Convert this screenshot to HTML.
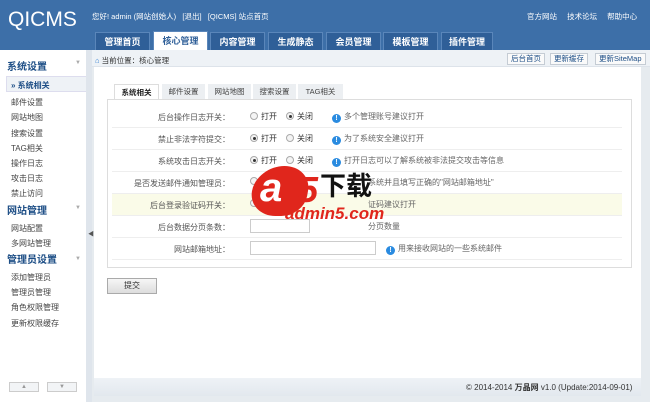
<!DOCTYPE html>
<html><head><meta charset="utf-8"><style>
*{margin:0;padding:0;box-sizing:border-box}
body{width:650px;height:402px;overflow:hidden;font-family:"Liberation Sans","Noto Sans CJK SC",sans-serif;font-size:8px;color:#333;background:#e6ebef;position:relative}
.abs{position:absolute}
#hd{left:0;top:0;width:650px;height:50px;background:#3d6fa8}
#logo{left:8px;top:8px;color:#fff;font-size:21px;letter-spacing:0}
.tab{position:absolute;top:32px;height:18px;background:#2f5f98;color:#fff;font-size:9px;font-weight:bold;text-align:center;line-height:18px;border:1px solid #5a86ba;border-bottom:none}
.tab.on{background:#fff;color:#2f5f98;top:31px;height:19px}
#side{left:0;top:50px;width:86px;height:352px;background:#fff}
.gt{position:absolute;left:7px;color:#1d4e86;font-size:10px;font-weight:bold}
.si{position:absolute;left:11px;font-size:8px;color:#444}
#crumb{left:92px;top:50px;width:558px;height:17px;background:#eef2f6;border-bottom:1px solid #dde3ea}
.btn{position:absolute;top:53px;height:12px;border:1px solid #c5ccd4;background:#fafafa;color:#1d4e86;font-size:7.5px;line-height:10px;padding:0 3px}
#main{left:94px;top:67px;width:547px;height:311px;background:#fff}
.ft{position:absolute;top:84px;height:15px;background:#eceff2;font-size:7.5px;line-height:15px;text-align:center;color:#444}
.ft.on{background:#fff;border:1px solid #ddd;border-bottom:none;height:16px;color:#222;font-weight:bold}
#box{left:107px;top:99px;width:525px;height:169px;border:1px solid #ddd}
.row{position:absolute;left:112px;width:510px;height:22px;border-bottom:1px solid #eee}
.lb{position:absolute;right:392px;top:6px;font-size:8px;color:#555;white-space:nowrap}
.r{position:absolute;top:5px;font-size:8px;color:#333}
.r i{display:inline-block;width:8px;height:8px;border:1px solid #aaa;border-radius:50%;vertical-align:-1px;margin-right:3px;background:#f4f4f4;position:relative}
.r i.c:after{content:"";position:absolute;left:2px;top:2px;width:3px;height:3px;border-radius:50%;background:#333}
.tip{position:absolute;top:5px;font-size:8px;color:#666;white-space:nowrap}
.tip b{display:inline-block;width:9px;height:9px;border-radius:50%;background:#2a8be0;color:#fff;font-size:7px;line-height:9px;text-align:center;margin-right:3px;vertical-align:-1px}
input{position:absolute;top:3px;height:14px;border:1px solid #ccc;background:#fff}
</style></head><body>
<div id="hd" class="abs"></div>
<div id="logo" class="abs">QICMS</div>
<div class="abs" style="left:92px;top:11px;color:#fff;font-size:7.5px">您好! admin (网站创始人) &nbsp; [退出] &nbsp; [QICMS] 站点首页</div>
<div class="abs" style="left:527px;top:11px;color:#fff;font-size:7.5px;word-spacing:8px">官方网站 技术论坛 帮助中心</div>
<div class="tab" style="left:95px;width:55px">管理首页</div>
<div class="tab on" style="left:153px;width:55px">核心管理</div>
<div class="tab" style="left:210px;width:55px">内容管理</div>
<div class="tab" style="left:268px;width:55px">生成静态</div>
<div class="tab" style="left:326px;width:55px">会员管理</div>
<div class="tab" style="left:383px;width:55px">模板管理</div>
<div class="tab" style="left:441px;width:52px">插件管理</div>
<div id="side" class="abs"></div>
<div class="abs" style="left:86px;top:50px;width:6px;height:352px;background:#dfe5ec"></div>
<div class="abs" style="left:88px;top:229px;font-size:6px;color:#555">◀</div>
<div class="gt" style="top:58px">系统设置</div><div class="abs" style="left:75px;top:60px;color:#aaa;font-size:6px">▼</div>
<div class="abs" style="left:6px;top:76px;width:80px;height:16px;background:#eef2f6;border:1px solid #dde;border-right:none"></div>
<div class="abs" style="left:11px;top:80px;font-size:8px;font-weight:bold;color:#1d4e86">» 系统相关</div>
<div class="si" style="top:97px">邮件设置</div>
<div class="si" style="top:112px">网站地图</div>
<div class="si" style="top:128px">搜索设置</div>
<div class="si" style="top:143px">TAG相关</div>
<div class="si" style="top:158px">操作日志</div>
<div class="si" style="top:173px">攻击日志</div>
<div class="si" style="top:188px">禁止访问</div>
<div class="gt" style="top:202px">网站管理</div><div class="abs" style="left:75px;top:205px;color:#aaa;font-size:6px">▼</div>
<div class="si" style="top:223px">网站配置</div>
<div class="si" style="top:238px">多网站管理</div>
<div class="gt" style="top:251px">管理员设置</div><div class="abs" style="left:75px;top:256px;color:#aaa;font-size:6px">▼</div>
<div class="si" style="top:272px">添加管理员</div>
<div class="si" style="top:287px">管理员管理</div>
<div class="si" style="top:302px">角色权限管理</div>
<div class="si" style="top:318px">更新权限缓存</div>
<div class="abs" style="left:9px;top:382px;width:30px;height:10px;border:1px solid #ccc;background:#f2f4f6;color:#999;font-size:6px;text-align:center;line-height:8px">▲</div>
<div class="abs" style="left:47px;top:382px;width:30px;height:10px;border:1px solid #ccc;background:#f2f4f6;color:#999;font-size:6px;text-align:center;line-height:8px">▼</div>
<div id="crumb" class="abs"></div>
<div class="abs" style="left:95px;top:55px;font-size:7.5px;color:#333"><span style="color:#2a7ad0">⌂</span> 当前位置：核心管理</div>
<div class="btn" style="left:507px">后台首页</div>
<div class="btn" style="left:550px">更新缓存</div>
<div class="btn" style="left:595px">更新SiteMap</div>
<div id="main" class="abs"></div>
<div class="ft on" style="left:114px;width:45px">系统相关</div>
<div class="ft" style="left:162px;width:43px">邮件设置</div>
<div class="ft" style="left:208px;width:43px">网站地图</div>
<div class="ft" style="left:253px;width:43px">搜索设置</div>
<div class="ft" style="left:298px;width:45px">TAG相关</div>
<div id="box" class="abs"></div>
<div class="row" style="top:106px"><span class="lb">后台操作日志开关：</span><span class="r" style="left:138px"><i></i>打开</span><span class="r" style="left:174px"><i class="c"></i>关闭</span><span class="tip" style="left:220px"><b>!</b>多个管理账号建议打开</span></div>
<div class="row" style="top:128px"><span class="lb">禁止非法字符提交：</span><span class="r" style="left:138px"><i class="c"></i>打开</span><span class="r" style="left:174px"><i></i>关闭</span><span class="tip" style="left:220px"><b>!</b>为了系统安全建议打开</span></div>
<div class="row" style="top:150px"><span class="lb">系统攻击日志开关：</span><span class="r" style="left:138px"><i class="c"></i>打开</span><span class="r" style="left:174px"><i></i>关闭</span><span class="tip" style="left:220px"><b>!</b>打开日志可以了解系统被非法提交攻击等信息</span></div>
<div class="row" style="top:172px"><span class="lb">是否发送邮件通知管理员：</span><span class="r" style="left:138px"><i></i></span><span class="tip" style="left:256px">系统并且填写正确的"网站邮箱地址"</span></div>
<div class="row" style="top:194px;background:#fafbe8"><span class="lb">后台登录验证码开关：</span><span class="r" style="left:138px"><i></i></span><span class="tip" style="left:256px">证码建议打开</span></div>
<div class="row" style="top:216px"><span class="lb">后台数据分页条数：</span><input style="left:138px;width:60px"><span class="tip" style="left:256px">分页数量</span></div>
<div class="row" style="top:238px"><span class="lb">网站邮箱地址：</span><input style="left:138px;width:126px"><span class="tip" style="left:274px"><b>!</b>用来接收网站的一些系统邮件</span></div>
<div class="abs" style="left:107px;top:278px;width:50px;height:16px;border:1px solid #aaa;background:linear-gradient(#f6f6f6,#ddd);font-size:8px;line-height:14px;text-align:center">提交</div>
<!-- watermark -->
<div class="abs" style="left:252px;top:166px;width:56px;height:50px;background:#e0261c;border-radius:50% 50% 40% 50%;transform:skewX(-10deg)"></div>
<div class="abs" style="left:260px;top:166px;font-size:40px;font-weight:bold;color:#fff;line-height:44px;font-style:italic">a</div>
<div class="abs" style="left:298px;top:170px;font-size:36px;font-weight:bold;color:#e0261c;line-height:40px;font-style:italic">5</div>
<div class="abs" style="left:320px;top:171px;font-size:26px;font-weight:bold;color:#111;line-height:30px">下载</div>
<div class="abs" style="left:285px;top:204px;font-size:17px;font-weight:bold;color:#e0261c;line-height:20px;font-style:italic">admin5.com</div>
<div class="abs" style="left:94px;top:378px;width:547px;height:18px;background:linear-gradient(#eef2f6,#e2e8ee)"></div>
<div class="abs" style="left:466px;top:382px;font-size:8px;color:#333">© 2014-2014 <b>万晶网</b> v1.0 (Update:2014-09-01)</div>
</body></html>
